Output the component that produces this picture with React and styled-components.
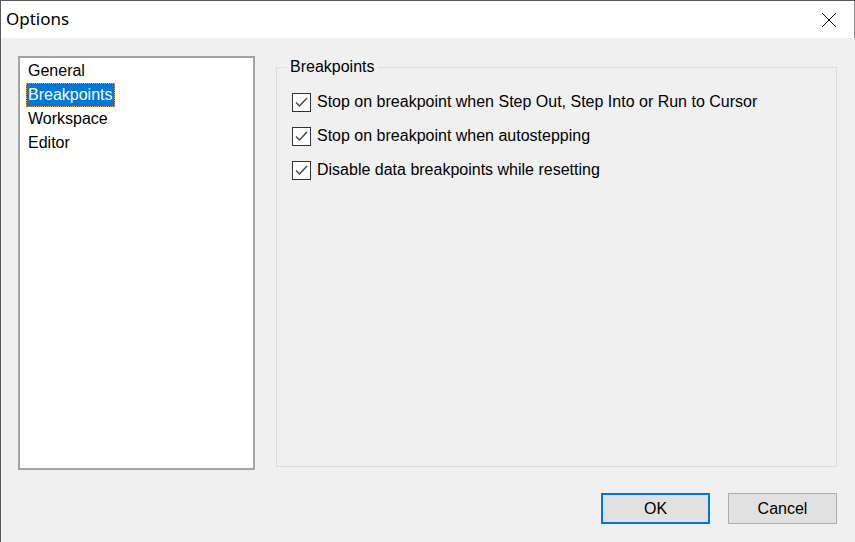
import { createGlobalStyle } from 'styled-components';
import styled from 'styled-components';

const GlobalStyle = createGlobalStyle`
  html, body {
    margin: 0;
    padding: 0;
    background: #f0f0f0;
  }
`;

const Window = styled.div`
  width: 855px;
  height: 542px;
  box-sizing: border-box;
  display: flex;
  flex-direction: column;
  border-left: 1px solid #5a5a5a;
  border-top: 1px solid #5a5a5a;
  background: #f0f0f0;
  font-family: "Liberation Sans", Arial, sans-serif;
  font-size: 16px;
  color: #000;
  overflow: hidden;
`;

const TitleBar = styled.div`
  height: 37px;
  flex: none;
  display: flex;
  align-items: center;
  justify-content: space-between;
  background: #fff;
  border-right: 1px solid #8a8a8a;
  padding-left: 5px;
`;

const Title = styled.span`
  font-family: "Noto Sans", "Open Sans", sans-serif;
  font-size: 17px;
  position: relative;
  top: -1px;
`;

const CloseButton = styled.div`
  width: 46px;
  height: 37px;
  display: flex;
  align-items: center;
  justify-content: center;
  margin-right: 2px;
`;

const Body = styled.div`
  flex: 1;
  display: flex;
  flex-direction: column;
  padding: 18px 18px 0 17px;
`;

const Main = styled.div`
  display: flex;
  gap: 21px;
`;

const ListBox = styled.ul`
  list-style: none;
  margin: 0;
  padding: 1px 0 0 6px;
  width: 237px;
  height: 414px;
  box-sizing: border-box;
  background: #fff;
  border: 2px solid #a3a3a3;
`;

const ListItem = styled.li`
  height: 24px;
  display: flex;
  align-items: center;
`;

const ItemLabel = styled.span`
  padding: 0 1px 0 1px;
  line-height: 22px;
  border: 1px dotted ${p => (p.$selected ? '#e0a050' : 'transparent')};
  background: ${p => (p.$selected ? '#0078d7' : 'transparent')};
  color: ${p => (p.$selected ? '#fff' : '#000')};
`;

const GroupBox = styled.fieldset`
  margin: 1px 0 0 0;
  padding: 0 0 0 15px;
  width: 561px;
  height: 410px;
  box-sizing: border-box;
  border: 1px solid #dcdcdc;
  display: flex;
  flex-direction: column;
`;

const Legend = styled.legend`
  margin-left: -5px;
  padding: 0 3px;
  line-height: 20px;
`;

const Options = styled.div`
  display: flex;
  flex-direction: column;
  gap: 14px;
  padding-top: 15px;
`;

const CheckRow = styled.label`
  display: flex;
  align-items: center;
  gap: 6px;
  height: 20px;
`;

const Box = styled.span`
  width: 19px;
  height: 19px;
  box-sizing: border-box;
  border: 1px solid #333;
  background: #fff;
  display: flex;
  align-items: center;
  justify-content: center;
`;

const ButtonRow = styled.div`
  display: flex;
  justify-content: flex-end;
  gap: 18px;
  margin-top: 23px;
`;

const Button = styled.button`
  width: 109px;
  height: 31px;
  box-sizing: border-box;
  background: #e1e1e1;
  border: ${p => (p.$default ? '2px solid #0078d7' : '1px solid #adadad')};
  font-family: "Liberation Sans", Arial, sans-serif;
  font-size: 16px;
  color: #000;
  padding: 0;
`;

function Checkbox({ label }) {
  return (
    <CheckRow>
      <Box>
        <svg width="15" height="15" viewBox="0 0 15 15">
          <polyline points="2,7.5 5.5,11 13,3" fill="none" stroke="#444" strokeWidth="1.4" />
        </svg>
      </Box>
      {label}
    </CheckRow>
  );
}

const pages = ['General', 'Breakpoints', 'Workspace', 'Editor'];

export default function App() {
  return (
    <>
      <GlobalStyle />
      <Window>
        <TitleBar>
          <Title>Options</Title>
          <CloseButton>
            <svg width="16" height="16" viewBox="0 0 16 16">
              <path d="M1 1L15 15M15 1L1 15" stroke="#000" strokeWidth="1" fill="none" />
            </svg>
          </CloseButton>
        </TitleBar>
        <Body>
          <Main>
            <ListBox>
              {pages.map(p => (
                <ListItem key={p}>
                  <ItemLabel $selected={p === 'Breakpoints'}>{p}</ItemLabel>
                </ListItem>
              ))}
            </ListBox>
            <GroupBox>
              <Legend>Breakpoints</Legend>
              <Options>
                <Checkbox label="Stop on breakpoint when Step Out, Step Into or Run to Cursor" />
                <Checkbox label="Stop on breakpoint when autostepping" />
                <Checkbox label="Disable data breakpoints while resetting" />
              </Options>
            </GroupBox>
          </Main>
          <ButtonRow>
            <Button $default>OK</Button>
            <Button>Cancel</Button>
          </ButtonRow>
        </Body>
      </Window>
    </>
  );
}
